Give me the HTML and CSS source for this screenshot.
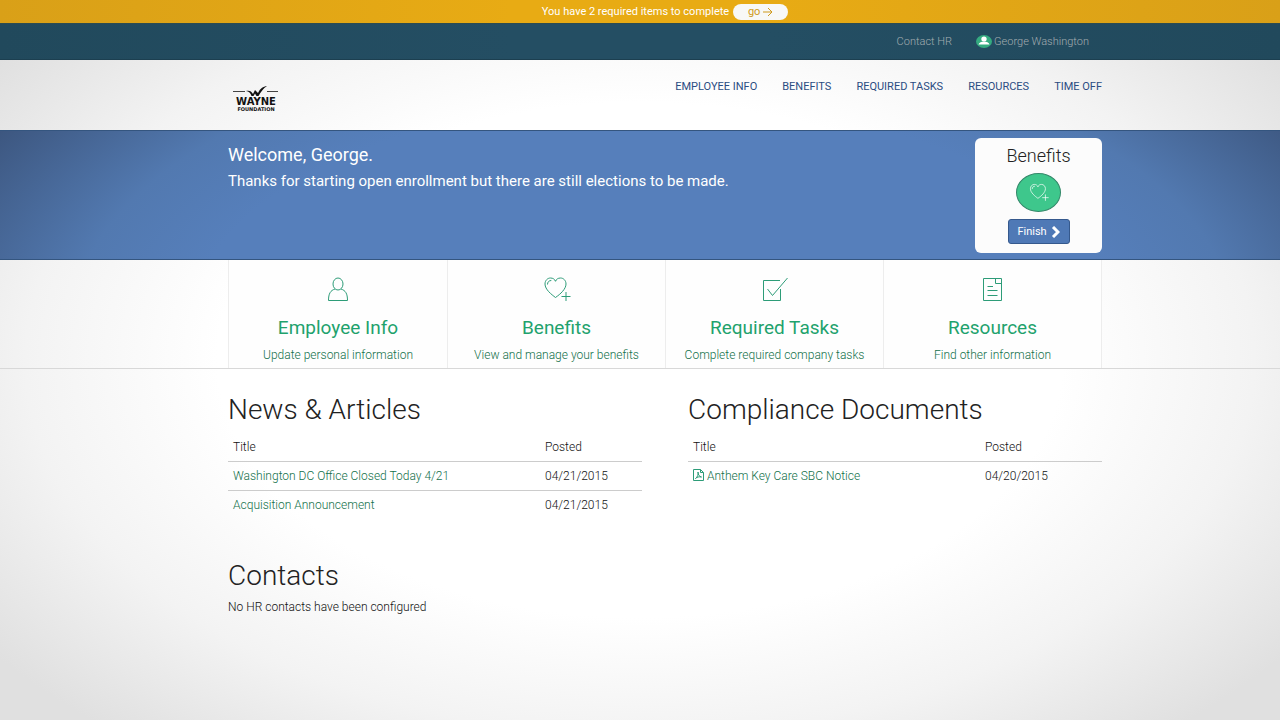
FILE: index.html
```html
<!DOCTYPE html>
<html lang="en">
<head>
    <meta charset="UTF-8">
    <meta name="viewport" content="width=device-width, initial-scale=1.0">
    <title>Wayne Foundation - Employee Home</title>
    <link rel="stylesheet" href="styles.css">
</head>
<body>
    <!-- shared heart icon -->
    <svg class="symbols" aria-hidden="true">
        <symbol id="heart" viewBox="0 0 28 28">
            <path d="M12.5 21.5C8.500 18.500 2 13.500 2 8C2 4.500 4.500 2 7.500 2C10 2 11.800 3.300 12.500 5.300C13.200 3.300 15 2 17.500 2C20.500 2 23 4.500 23 8C23 13 17.500 18 12.500 21.500Z"/>
            <path d="M4.500 8.500C4.500 6 6 4.500 8.300 4.500M23 16V25M18.500 20.500H27.500"/>
        </symbol>
    </svg>

    <div class="alert-bar band">
        <span>You have 2 required items to complete</span>
        <a class="go" href="#tasks">go
            <svg width="10" height="10" viewBox="0 0 10 10"><path d="M0 5H9M5 1L9 5L5 9"/></svg>
        </a>
    </div>

    <div class="top-bar band">
        <div class="container">
            <a href="#contacts">Contact HR</a>
            <a class="user" href="#profile">
                <svg width="16" height="13" viewBox="0 0 16 13">
                    <ellipse cx="8" cy="6.500" rx="8" ry="6.500" fill="#35ab80"/>
                    <ellipse cx="8" cy="4" rx="2.700" ry="2.500" fill="#fff"/>
                    <path d="M2.500 9.500C3 7.500 5.500 6.500 8 6.500S13 7.500 13.500 9.500Z" fill="#fff"/>
                </svg>
                George Washington
            </a>
        </div>
    </div>

    <header class="band">
        <div class="container">
            <a class="logo" href="#home">
                <svg width="48" height="28" viewBox="0 0 48 28" role="img" aria-label="Wayne Foundation">
                    <path d="M1 5.500H13M35 5.500H46" stroke="#444" fill="none"/>
                    <path d="M14 5C17 4 19.500 5 21 8L23 4L26 7C28 2.500 31 .5 35 0C31 2.500 29 6 26.500 10H24.500L23 7.500L21.500 10H19.500C18.500 7 17 5.500 14 5Z" fill="#111"/>
                    <text x="24" y="19" class="logo-name">WAYNE</text>
                    <text x="24" y="25" class="logo-sub">FOUNDATION</text>
                </svg>
            </a>
            <nav>
                <a href="#info">EMPLOYEE INFO</a>
                <a href="#benefits">BENEFITS</a>
                <a href="#tasks">REQUIRED TASKS</a>
                <a href="#resources">RESOURCES</a>
                <a href="#time-off">TIME OFF</a>
            </nav>
        </div>
    </header>

    <section class="hero band">
        <div class="container">
            <div class="welcome">
                <h1>Welcome, George.</h1>
                <p>Thanks for starting open enrollment but there are still elections to be made.</p>
            </div>
            <div class="card">
                <h2>Benefits</h2>
                <span class="badge"><svg width="20" height="20"><use href="#heart"/></svg></span>
                <button type="button">Finish
                    <svg width="9" height="12" viewBox="0 0 9 12"><path d="M2 1L7 6L2 11"/></svg>
                </button>
            </div>
        </div>
    </section>

    <section class="tiles band">
        <div class="container">
            <a id="info" href="#info">
                <svg width="28" height="28" viewBox="0 0 28 28">
                    <ellipse cx="14" cy="8" rx="5" ry="6"/>
                    <path d="M11 13C6.500 14.500 4.500 17.500 4.500 24.500H23.500C23.500 17.500 21.500 14.500 17 13"/>
                </svg>
                <h3>Employee Info</h3>
                <p>Update personal information</p>
            </a>
            <a id="benefits" href="#benefits">
                <svg width="28" height="28"><use href="#heart"/></svg>
                <h3>Benefits</h3>
                <p>View and manage your benefits</p>
            </a>
            <a id="tasks" href="#tasks">
                <svg width="28" height="28" viewBox="0 0 28 28">
                    <path d="M19 4.500H2.500V24.500H19.500V13M6.500 13L11.500 19.500L26.500 2"/>
                </svg>
                <h3>Required Tasks</h3>
                <p>Complete required company tasks</p>
            </a>
            <a id="resources" href="#resources">
                <svg width="28" height="28" viewBox="0 0 28 28">
                    <path d="M4.500 2.500H22.500V24.500H4.500ZM16.500 2.500V7.500H22.500M8.500 10.500H14M8.500 14.500H18.500M8.500 19.500H18.500"/>
                </svg>
                <h3>Resources</h3>
                <p>Find other information</p>
            </a>
        </div>
    </section>

    <main class="band">
        <div class="container">
            <section>
                <h2>News &amp; Articles</h2>
                <table>
                    <thead>
                        <tr><th>Title</th><th class="posted">Posted</th></tr>
                    </thead>
                    <tbody>
                        <tr><td><a href="#closed">Washington DC Office Closed Today 4/21</a></td><td>04/21/2015</td></tr>
                        <tr><td><a href="#acquisition">Acquisition Announcement</a></td><td>04/21/2015</td></tr>
                    </tbody>
                </table>
            </section>
            <section>
                <h2>Compliance Documents</h2>
                <table>
                    <thead>
                        <tr><th>Title</th><th class="posted wide">Posted</th></tr>
                    </thead>
                    <tbody>
                        <tr>
                            <td>
                                <a href="#anthem"><svg class="pdf" width="11" height="12" viewBox="0 0 11 12"><path d="M.5 .5H7.500L10.500 3.500V11.500H.5ZM7.500 .5V3.500H10.500M2.500 9.500C4.500 8 5.500 5.500 5 3C5 6 6.500 7.500 8.500 8C6 7.500 4 8 2.500 9.500"/></svg>
                                Anthem Key Care SBC Notice</a>
                            </td>
                            <td>04/20/2015</td>
                        </tr>
                    </tbody>
                </table>
            </section>
            <section id="contacts">
                <h2>Contacts</h2>
                <p>No HR contacts have been configured</p>
            </section>
        </div>
    </main>
</body>
</html>
```
FILE: styles.css
```css
* {
    box-sizing: border-box;
}
body {
    margin: 0;
    min-height: 100vh;
    font-family: Roboto, "Liberation Sans", sans-serif;
    font-size: 12px;
    font-weight: 300;
    line-height: 16px;
    color: #111;
    background: radial-gradient(ellipse 60% 65% at 50% 50%, #fff 55%, #f3f3f3 80%, #e0e0e0 105%);
}
h1, h2, h3, p {
    margin: 0;
    font-weight: 300;
}
a {
    color: #12704a;
    text-decoration: none;
}
svg {
    fill: none;
    stroke-width: 1;
}
.symbols {
    position: absolute;
    width: 0;
    height: 0;
}
/* full width rows, content sits a little right of centre */
.band {
    padding-left: 50px;
}
.container {
    width: 100%;
    max-width: 874px;
    margin: 0 auto;
}

/* alert and top bars */
.alert-bar {
    display: flex;
    justify-content: center;
    align-items: center;
    gap: 4px;
    height: 23px;
    color: #fff;
    font-size: 11px;
    font-weight: 400;
    background: linear-gradient(90deg, #d9a018, #e8ab14 40%, #e8ab14 60%, #d9a018);
}
.go {
    display: flex;
    justify-content: center;
    align-items: center;
    gap: 3px;
    width: 55px;
    border-radius: 8px;
    color: #cf9a1c;
    background: #f8f8f6;
}
.go svg {
    stroke: #cf9a1c;
}
.top-bar {
    font-size: 11px;
    background: linear-gradient(90deg, #21495c, #244e63 40%, #244e63 60%, #21495c);
    border-top: 1px solid #2d4c50;
    border-bottom: 1px solid #1c3f50;
}
.top-bar .container {
    display: flex;
    justify-content: flex-end;
    align-items: center;
    gap: 24px;
    height: 35px;
    padding-right: 13px;
}
.top-bar a {
    color: #a3adb1;
}
.user {
    display: flex;
    align-items: center;
    gap: 2px;
}

/* logo and menu */
header .container {
    display: flex;
    justify-content: space-between;
    height: 70px;
    padding-top: 19px;
}
.logo {
    padding: 7px 4px;
}
.logo text {
    fill: #111;
    font-family: "DejaVu Sans", sans-serif;
    font-weight: 700;
    text-anchor: middle;
}
.logo .logo-name {
    font-size: 10px;
}
.logo .logo-sub {
    font-size: 5px;
}
nav {
    display: flex;
    gap: 25px;
}
nav a {
    color: #2b4c82;
    font-size: 11px;
    font-weight: 400;
}

/* welcome */
.hero {
    color: #fff;
    background: radial-gradient(ellipse 62% 300% at 51% 150%, #567fbb 58%, #5279b0 73%, #3b547c 98%);
    border-top: 1px solid #34557f;
    border-bottom: 1px solid #34557f;
}
.hero .container {
    display: flex;
    justify-content: space-between;
    padding: 7px 0 6px;
}
.welcome {
    padding-top: 5px;
}
.welcome h1 {
    font-size: 18px;
    line-height: 24px;
    font-weight: 400;
}
.welcome p {
    font-size: 15px;
    line-height: 28px;
    font-weight: 400;
}
.card {
    display: flex;
    flex-direction: column;
    align-items: center;
    width: 127px;
    height: 115px;
    padding-top: 6px;
    border-radius: 6px;
    background: #fcfcfc;
}
.card h2 {
    color: #222;
    font-size: 18px;
    line-height: 24px;
}
.badge {
    display: flex;
    justify-content: center;
    align-items: center;
    width: 45px;
    height: 39px;
    margin: 5px 0 7px;
    border: 1px solid #35886a;
    border-radius: 50%;
    background: #3ec78c;
}
.badge svg {
    stroke: #fff;
}
.card button {
    display: flex;
    justify-content: center;
    align-items: center;
    gap: 4px;
    width: 62px;
    height: 25px;
    padding: 0;
    border: 1px solid #35598d;
    border-radius: 3px;
    color: #fff;
    font: 400 11px/16px Roboto, sans-serif;
    background: #4f79b6;
}
.card button svg {
    stroke: #fff;
    stroke-width: 3;
}

/* shortcuts */
.tiles {
    border-bottom: 1px solid #d8d8d8;
}
.tiles .container {
    display: grid;
    grid-template-columns: repeat(4, 1fr);
    border-left: 1px solid #ededed;
    border-right: 1px solid #ededed;
    background: #fefefe;
}
.tiles a {
    height: 108px;
    padding-top: 16px;
    text-align: center;
}
.tiles a + a {
    border-left: 1px solid #ededed;
}
.tiles svg {
    display: block;
    margin: 0 auto 12px;
    stroke: #2d9c78;
}
.tiles h3 {
    color: #1fa26d;
    font-size: 19px;
    line-height: 24px;
    font-weight: 400;
}
.tiles p {
    margin-top: 7px;
}

/* content */
main .container {
    display: grid;
    grid-template-columns: 1fr 1fr;
    gap: 39px 46px;
    padding: 23px 0 40px;
}
main h2 {
    color: #222;
    font-size: 28px;
    line-height: 36px;
}
main p {
    margin-top: 5px;
}
table {
    width: 100%;
    margin-top: 5px;
    border-collapse: collapse;
}
th, td {
    padding: 6px 5px;
    text-align: left;
    font-weight: 300;
}
tbody tr {
    border-top: 1px solid #ccc;
}
.posted {
    width: 102px;
}
.posted.wide {
    width: 122px;
}
.pdf {
    stroke: #2d9c78;
    vertical-align: -1px;
}
```
